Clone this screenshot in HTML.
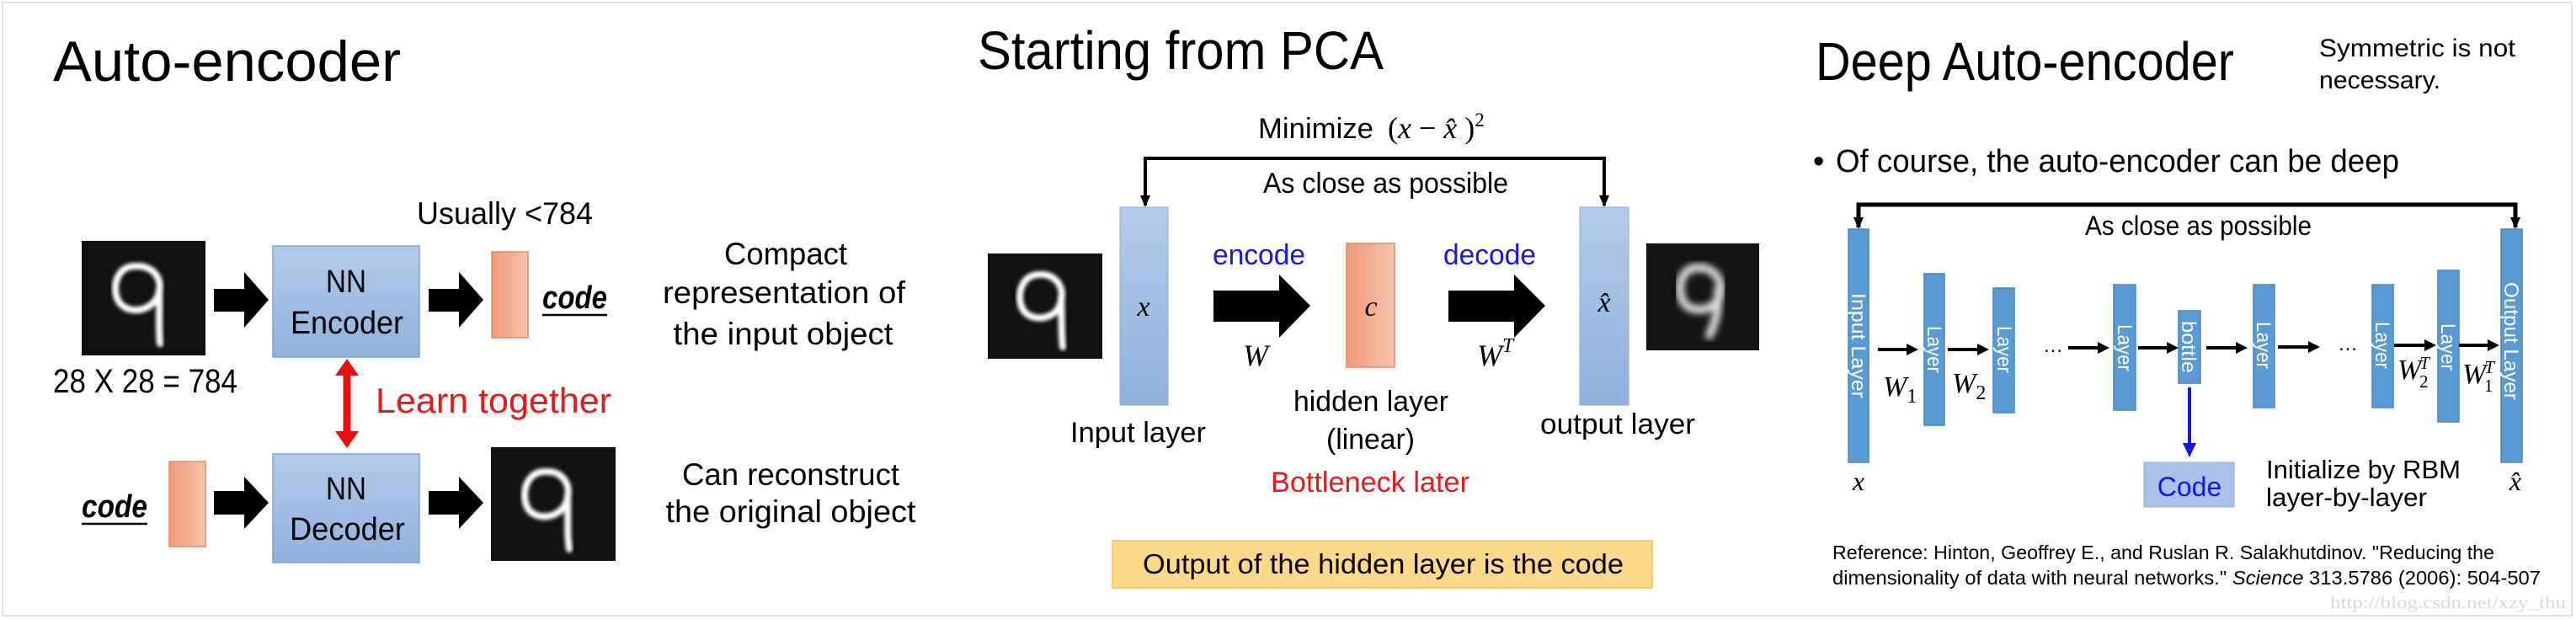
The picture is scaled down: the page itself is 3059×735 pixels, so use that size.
<!DOCTYPE html>
<html><head><meta charset="utf-8"><style>
html,body{margin:0;padding:0;background:#fff;}
svg{display:block;}
text{font-family:"Liberation Sans",sans-serif;fill:#000;}
.m{font-family:"Liberation Serif",serif;font-style:italic;}
</style></head><body>
<svg width="3059" height="735" viewBox="0 0 3059 735" xmlns="http://www.w3.org/2000/svg">
<defs>
<linearGradient id="bg" x1="0" y1="0" x2="0" y2="1"><stop offset="0" stop-color="#b3cbea"/><stop offset="1" stop-color="#8fb2de"/></linearGradient>
<linearGradient id="og" x1="0" y1="0" x2="1" y2="0"><stop offset="0" stop-color="#ef9c78"/><stop offset="1" stop-color="#f6c3ad"/></linearGradient>
<filter id="bl"><feGaussianBlur stdDeviation="2"/></filter>
<filter id="bl2"><feGaussianBlur stdDeviation="4"/></filter>
</defs>
<rect x="3" y="3" width="3051" height="728" fill="none" stroke="#e0e0e0" stroke-width="2"/>

<!-- Panel 1 -->
<text x="63" y="96" font-size="68" textLength="413" lengthAdjust="spacingAndGlyphs">Auto-encoder</text>
<rect x="97" y="286" width="147" height="136" fill="#111"/>
<path d="M160 316 C138 316 132 343 141 358 C151 374 180 371 188 350 C195 330 180 315 162 316 M189 343 C190 368 188 388 190 408" fill="none" stroke="#fff" stroke-width="8" stroke-linecap="round" filter="url(#bl)"/>
<polygon points="254,343 290,343 290,323 319,356 290,389 290,370 254,370" fill="#000"/>
<rect x="324" y="292" width="174" height="132" fill="url(#bg)" stroke="#7fa3d2" stroke-width="1.5"/>
<text x="411" y="347" font-size="38" text-anchor="middle" textLength="48" lengthAdjust="spacingAndGlyphs">NN</text>
<text x="345" y="396" font-size="38" textLength="134" lengthAdjust="spacingAndGlyphs">Encoder</text>
<polygon points="509,343 545,343 545,323 574,356 545,389 545,370 509,370" fill="#000"/>
<rect x="584" y="299" width="43" height="102" fill="url(#og)" stroke="#e48a64" stroke-width="1.5"/>
<text x="644" y="366" font-size="38" font-weight="bold" font-style="italic" textLength="77" lengthAdjust="spacingAndGlyphs">code</text>
<line x1="644" y1="374" x2="721" y2="374" stroke="#000" stroke-width="2.5"/>
<text x="495" y="266" font-size="37" textLength="209" lengthAdjust="spacingAndGlyphs">Usually &lt;784</text>
<text x="63" y="466" font-size="40" textLength="219" lengthAdjust="spacingAndGlyphs">28 X 28 = 784</text>
<line x1="412" y1="440" x2="412" y2="518" stroke="#e81010" stroke-width="9"/>
<polygon points="398,446 426,446 412,426" fill="#e81010"/>
<polygon points="398,512 426,512 412,532" fill="#e81010"/>
<text x="446" y="490" font-size="42" style="fill:#e51a1a" textLength="280" lengthAdjust="spacingAndGlyphs">Learn together</text>
<text x="933" y="314" font-size="37" text-anchor="middle" textLength="146" lengthAdjust="spacingAndGlyphs">Compact</text>
<text x="931" y="360" font-size="37" text-anchor="middle" textLength="288" lengthAdjust="spacingAndGlyphs">representation of</text>
<text x="930" y="409" font-size="37" text-anchor="middle" textLength="261" lengthAdjust="spacingAndGlyphs">the input object</text>

<text x="97" y="614" font-size="38" font-weight="bold" font-style="italic" textLength="78" lengthAdjust="spacingAndGlyphs">code</text>
<line x1="97" y1="622" x2="175" y2="622" stroke="#000" stroke-width="2.5"/>
<rect x="201" y="548" width="43" height="101" fill="url(#og)" stroke="#e48a64" stroke-width="1.5"/>
<polygon points="254,583 290,583 290,566 319,597 290,628 290,611 254,611" fill="#000"/>
<rect x="324" y="539" width="174" height="129" fill="url(#bg)" stroke="#7fa3d2" stroke-width="1.5"/>
<text x="411" y="593" font-size="38" text-anchor="middle" textLength="48" lengthAdjust="spacingAndGlyphs">NN</text>
<text x="344" y="641" font-size="38" textLength="137" lengthAdjust="spacingAndGlyphs">Decoder</text>
<polygon points="509,583 545,583 545,566 574,597 545,628 545,611 509,611" fill="#000"/>
<rect x="583" y="531" width="148" height="135" fill="#111"/>
<path d="M647 560 C624 560 618 588 627 604 C637 619 666 616 673 595 C680 574 666 559 649 560 M674 588 C675 613 673 633 676 652" fill="none" stroke="#fff" stroke-width="8" stroke-linecap="round" filter="url(#bl)"/>
<text x="939" y="576" font-size="37" text-anchor="middle" textLength="258" lengthAdjust="spacingAndGlyphs">Can reconstruct</text>
<text x="939" y="620" font-size="37" text-anchor="middle" textLength="297" lengthAdjust="spacingAndGlyphs">the original object</text>

<!-- Panel 2 -->
<text x="1161" y="82" font-size="64" textLength="482" lengthAdjust="spacingAndGlyphs">Starting from PCA</text>
<text x="1494" y="164" font-size="34" textLength="137" lengthAdjust="spacingAndGlyphs">Minimize</text>
<text x="1648" y="164" font-size="36" style="font-family:'Liberation Serif',serif">(<tspan font-style="italic">x</tspan> − <tspan font-style="italic">x̂</tspan> )<tspan dy="-14" font-size="23">2</tspan></text>
<polyline points="1360,244 1360,188 1905,188 1905,244" fill="none" stroke="#000" stroke-width="4"/>
<polygon points="1354,232 1366,232 1360,246" fill="#000"/>
<polygon points="1899,232 1911,232 1905,246" fill="#000"/>
<text x="1500" y="229" font-size="34" textLength="291" lengthAdjust="spacingAndGlyphs">As close as possible</text>
<rect x="1173" y="301" width="136" height="125" fill="#111"/>
<path d="M1234 326 C1212 326 1206 353 1215 368 C1225 383 1253 380 1259 361 C1266 340 1252 325 1236 326 M1260 353 C1261 377 1260 395 1262 412" fill="none" stroke="#fff" stroke-width="8" stroke-linecap="round" filter="url(#bl)"/>
<rect x="1330" y="246" width="57" height="235" fill="url(#bg)" stroke="#8badd8"/>
<text x="1358" y="375" font-size="34" class="m" text-anchor="middle">x</text>
<text x="1440" y="314" font-size="34" style="fill:#1818e0" textLength="110" lengthAdjust="spacingAndGlyphs">encode</text>
<polygon points="1441,345 1519,345 1519,326 1556,363 1519,401 1519,382 1441,382" fill="#000"/>
<text x="1476" y="434" font-size="36" class="m">W</text>
<rect x="1599" y="289" width="57" height="147" fill="url(#og)" stroke="#e48a64" stroke-width="1.5"/>
<text x="1628" y="375" font-size="34" class="m" text-anchor="middle">c</text>
<text x="1714" y="314" font-size="34" style="fill:#1818e0" textLength="110" lengthAdjust="spacingAndGlyphs">decode</text>
<polygon points="1720,345 1798,345 1798,326 1835,363 1798,401 1798,382 1720,382" fill="#000"/>
<text x="1754" y="434" font-size="36" class="m">W<tspan dy="-16" font-size="24">T</tspan></text>
<rect x="1876" y="246" width="58" height="235" fill="url(#bg)" stroke="#8badd8"/>
<text x="1905" y="370" font-size="34" class="m" text-anchor="middle">x̂</text>
<rect x="1955" y="289" width="134" height="127" fill="#141414"/>
<path d="M2015 318 C1995 318 1990 345 2000 360 C2010 372 2035 370 2042 352 C2048 332 2033 316 2017 318 M2040 345 C2042 368 2036 385 2030 398" fill="none" stroke="#ddd" stroke-width="10" stroke-linecap="round" filter="url(#bl2)"/>
<text x="1271" y="525" font-size="34" textLength="161" lengthAdjust="spacingAndGlyphs">Input layer</text>
<text x="1536" y="488" font-size="34" textLength="184" lengthAdjust="spacingAndGlyphs">hidden layer</text>
<text x="1575" y="533" font-size="34" textLength="105" lengthAdjust="spacingAndGlyphs">(linear)</text>
<text x="1509" y="584" font-size="34" style="fill:#e51a1a" textLength="236" lengthAdjust="spacingAndGlyphs">Bottleneck later</text>
<text x="1829" y="515" font-size="34" textLength="184" lengthAdjust="spacingAndGlyphs">output layer</text>
<rect x="1321" y="642" width="641" height="56" fill="#fdd98a" stroke="#f5c04a" stroke-width="1.5"/>
<text x="1357" y="681" font-size="33" textLength="571" lengthAdjust="spacingAndGlyphs">Output of the hidden layer is the code</text>

<!-- Panel 3 -->
<text x="2156" y="95" font-size="64" textLength="497" lengthAdjust="spacingAndGlyphs">Deep Auto-encoder</text>
<text x="2754" y="67" font-size="30" textLength="233" lengthAdjust="spacingAndGlyphs">Symmetric is not</text>
<text x="2754" y="105" font-size="30" textLength="144" lengthAdjust="spacingAndGlyphs">necessary.</text>
<text x="2153" y="204" font-size="38">•</text>
<text x="2180" y="204" font-size="38" textLength="669" lengthAdjust="spacingAndGlyphs">Of course, the auto-encoder can be deep</text>
<polyline points="2207,270 2207,243 2987,243 2987,270" fill="none" stroke="#000" stroke-width="5"/>
<polygon points="2201,258 2213,258 2207,272" fill="#000"/>
<polygon points="2981,258 2993,258 2987,272" fill="#000"/>
<text x="2476" y="279" font-size="32" textLength="269" lengthAdjust="spacingAndGlyphs">As close as possible</text>
<g fill="#5b9bd5" stroke="#4a86be" stroke-width="1.5">
<rect x="2195" y="272" width="24" height="277"/>
<rect x="2285" y="325" width="24" height="180"/>
<rect x="2367" y="342" width="25" height="148"/>
<rect x="2510" y="338" width="26" height="149"/>
<rect x="2587" y="369" width="26" height="86"/>
<rect x="2676" y="338" width="25" height="146"/>
<rect x="2817" y="338" width="25" height="146"/>
<rect x="2895" y="321" width="25" height="180"/>
<rect x="2970" y="272" width="25" height="277"/>
</g>
<g font-size="24">
<text transform="translate(2199,348) rotate(90)" style="fill:#fff" textLength="125" lengthAdjust="spacingAndGlyphs">Input Layer</text>
<text transform="translate(2289,387) rotate(90)" style="fill:#fff" textLength="56" lengthAdjust="spacingAndGlyphs">Layer</text>
<text transform="translate(2372,387) rotate(90)" style="fill:#fff" textLength="56" lengthAdjust="spacingAndGlyphs">Layer</text>
<text transform="translate(2515,385) rotate(90)" style="fill:#fff" textLength="56" lengthAdjust="spacingAndGlyphs">Layer</text>
<text transform="translate(2591,381) rotate(90)" style="fill:#fff" textLength="62" lengthAdjust="spacingAndGlyphs">bottle</text>
<text transform="translate(2680,382) rotate(90)" style="fill:#fff" textLength="56" lengthAdjust="spacingAndGlyphs">Layer</text>
<text transform="translate(2821,382) rotate(90)" style="fill:#fff" textLength="56" lengthAdjust="spacingAndGlyphs">Layer</text>
<text transform="translate(2899,384) rotate(90)" style="fill:#fff" textLength="56" lengthAdjust="spacingAndGlyphs">Layer</text>
<text transform="translate(2974,335) rotate(90)" style="fill:#fff" textLength="140" lengthAdjust="spacingAndGlyphs">Output Layer</text>
</g>
<g stroke="#000" stroke-width="4">
<line x1="2230" y1="415" x2="2266" y2="415"/><line x1="2313" y1="415" x2="2350" y2="415"/>
<line x1="2456" y1="413" x2="2493" y2="413"/><line x1="2539" y1="413" x2="2575" y2="413"/>
<line x1="2620" y1="413" x2="2657" y2="413"/><line x1="2705" y1="412" x2="2743" y2="412"/>
<line x1="2843" y1="410" x2="2881" y2="410"/><line x1="2920" y1="410" x2="2956" y2="410"/>
</g>
<g fill="#000">
<polygon points="2264,408 2278,415 2264,422"/><polygon points="2348,408 2362,415 2348,422"/>
<polygon points="2491,406 2505,413 2491,420"/><polygon points="2573,406 2587,413 2573,420"/>
<polygon points="2655,406 2669,413 2655,420"/><polygon points="2741,405 2755,412 2741,419"/>
<polygon points="2879,403 2893,410 2879,417"/><polygon points="2954,403 2968,410 2954,417"/>
</g>
<text x="2426" y="418" font-size="24">…</text>
<text x="2776" y="416" font-size="24">…</text>
<text x="2236" y="470" font-size="34" class="m">W<tspan dy="8" font-size="24" font-style="normal">1</tspan></text>
<text x="2318" y="466" font-size="34" class="m">W<tspan dy="8" font-size="24" font-style="normal">2</tspan></text>
<text x="2847" y="450" font-size="34" class="m">W<tspan dx="-2" dy="-12" font-size="21">T</tspan><tspan dx="-12" dy="22" font-size="21" font-style="normal">2</tspan></text>
<text x="2924" y="455" font-size="34" class="m">W<tspan dx="-2" dy="-12" font-size="21">T</tspan><tspan dx="-12" dy="22" font-size="21" font-style="normal">1</tspan></text>
<line x1="2600" y1="460" x2="2600" y2="530" stroke="#1515e6" stroke-width="4"/>
<polygon points="2592,526 2608,526 2600,543" fill="#1515e6"/>
<rect x="2546" y="549" width="107" height="53" fill="#a9c4e8" stroke="#8fb0dc"/>
<text x="2600" y="589" font-size="32" text-anchor="middle" style="fill:#1515e6">Code</text>
<text x="2691" y="568" font-size="31" textLength="231" lengthAdjust="spacingAndGlyphs">Initialize by RBM</text>
<text x="2691" y="601" font-size="31" textLength="191" lengthAdjust="spacingAndGlyphs">layer-by-layer</text>
<text x="2207" y="582" font-size="32" class="m" text-anchor="middle">x</text>
<text x="2987" y="582" font-size="32" class="m" text-anchor="middle">x̂</text>
<text x="2176" y="664" font-size="23" textLength="786" lengthAdjust="spacingAndGlyphs">Reference: Hinton, Geoffrey E., and Ruslan R. Salakhutdinov. "Reducing the</text>
<text x="2176" y="694" font-size="23" textLength="841" lengthAdjust="spacingAndGlyphs">dimensionality of data with neural networks." <tspan font-style="italic">Science</tspan> 313.5786 (2006): 504-507</text>
<text x="2767" y="722" font-size="20" style="fill:#d8d8d8;font-family:'Liberation Serif',serif" textLength="280" lengthAdjust="spacingAndGlyphs">http://blog.csdn.net/xzy_thu</text>
</svg>
</body></html>
